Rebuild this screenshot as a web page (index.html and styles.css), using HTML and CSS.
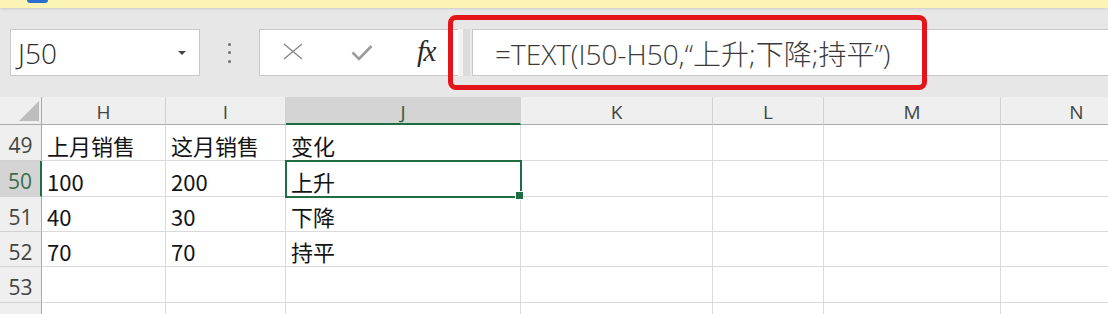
FILE: index.html
```html
<!DOCTYPE html>
<html lang="zh">
<head>
<meta charset="utf-8">
<title>Excel TEXT</title>
<link rel="stylesheet" href="styles.css">
</head>
<body>
<div class="topbar"><span class="orb"></span></div>
<div class="fbar">
  <div class="namebox"><span class="ref">J50</span><span class="caret"></span></div>
  <div class="grip"><i></i><i></i><i></i></div>
  <div class="btns">
    <svg class="ic-x" width="20" height="17" viewBox="0 0 20 17"><path d="M1 1 L19 16 M19 1 L1 16" stroke="#8a8a8a" stroke-width="1.5" fill="none"/></svg>
    <svg class="ic-ok" width="22" height="17" viewBox="0 0 22 17"><path d="M1.5 8.5 L8 15 L20.5 2" stroke="#9a9a9a" stroke-width="2.6" fill="none"/></svg>
    <span class="fx">fx</span>
  </div>
  <div class="split"></div>
  <div class="formula">=TEXT(I50-H50,“上升;下降;持平”)</div>
  <div class="mark"></div>
</div>
<div class="sheet">
  <div class="ch corner"><svg width="20" height="20" viewBox="0 0 20 20"><path d="M20 0 L20 20 L0 20 Z" fill="#bdbdbd"/></svg></div>
  <div class="ch">H</div>
  <div class="ch">I</div>
  <div class="ch sel">J</div>
  <div class="ch">K</div>
  <div class="ch">L</div>
  <div class="ch">M</div>
  <div class="ch">N</div>

  <div class="rh">49</div>
  <div class="c">上月销售</div>
  <div class="c">这月销售</div>
  <div class="c">变化</div>
  <div class="c"></div><div class="c"></div><div class="c"></div><div class="c"></div>

  <div class="rh sel">50</div>
  <div class="c">100</div>
  <div class="c">200</div>
  <div class="c active">上升</div>
  <div class="c"></div><div class="c"></div><div class="c"></div><div class="c"></div>

  <div class="rh">51</div>
  <div class="c">40</div>
  <div class="c">30</div>
  <div class="c">下降</div>
  <div class="c"></div><div class="c"></div><div class="c"></div><div class="c"></div>

  <div class="rh">52</div>
  <div class="c">70</div>
  <div class="c">70</div>
  <div class="c">持平</div>
  <div class="c"></div><div class="c"></div><div class="c"></div><div class="c"></div>

  <div class="rh">53</div>
  <div class="c"></div><div class="c"></div><div class="c"></div>
  <div class="c"></div><div class="c"></div><div class="c"></div><div class="c"></div>

  <div class="rh"></div>
  <div class="c"></div><div class="c"></div><div class="c"></div>
  <div class="c"></div><div class="c"></div><div class="c"></div><div class="c"></div>
</div>
</body>
</html>
```

FILE: styles.css
```css
* { box-sizing: border-box; }
html, body {
  margin: 0;
  padding: 0;
  width: 1108px;
  height: 314px;
  overflow: hidden;
  background: #e7e7e7;
  font-family: "Open Sans", "Noto Sans CJK SC", sans-serif;
}

.topbar {
  height: 8px;
  background: #fcf4b4;
  box-shadow: 0 1px 3px rgba(0,0,0,0.12);
  padding-left: 27px;
  position: relative;
  z-index: 2;
}
.orb {
  display: block;
  width: 21px;
  height: 3px;
  background: #2a6fcf;
  border-radius: 0 0 11px 11px;
}

.fbar {
  position: relative;
  height: 89px;
  padding-top: 21px;
  display: flex;
  align-items: flex-start;
}
.namebox {
  margin-left: 10px;
  width: 190px;
  height: 47px;
  background: #fff;
  border: 1px solid #c9c9c9;
  display: flex;
  align-items: center;
  justify-content: space-between;
  padding: 0 13px 0 7px;
}
.ref {
  font-family: "Open Sans", sans-serif;
  font-weight: 300;
  font-size: 28px;
  color: #2b2b2b;
  line-height: 1;
  margin-top: 1px;
}
.caret {
  width: 0;
  height: 0;
  border-left: 4px solid transparent;
  border-right: 4px solid transparent;
  border-top: 4px solid #444;
}
.grip {
  width: 59px;
  height: 47px;
  display: flex;
  flex-direction: column;
  align-items: center;
  justify-content: center;
  gap: 5.5px;
}
.grip i {
  display: block;
  width: 3px;
  height: 3px;
  border-radius: 50%;
  background: #6f6f6f;
}
.btns {
  width: 199px;
  height: 47px;
  background: #fff;
  border: 1px solid #c9c9c9;
  border-right: none;
  display: flex;
  align-items: center;
  padding-left: 23px;
}
.ic-x { margin-top: -2px; }
.ic-ok { margin-left: 48px; margin-top: -1px; }
.fx {
  margin-left: 44px;
  font-family: "Liberation Serif", serif;
  font-style: italic;
  font-size: 29px;
  color: #2a2a2a;
  letter-spacing: -1.5px;
  margin-top: -3px;
}
.split {
  width: 14px;
  height: 47px;
  background: linear-gradient(to right, #f3f3f3 0 5px, #dcdcdc 5px 12px, #e9e9e9 12px);
}
.formula {
  flex: 1;
  height: 47px;
  background: #fff;
  border-top: 1px solid #c9c9c9;
  border-bottom: 1px solid #c9c9c9;
  border-left: 1px solid #c9c9c9;
  display: flex;
  align-items: center;
  padding-left: 22px;
  font-family: "Open Sans", "Noto Sans CJK SC", sans-serif;
  font-weight: 300;
  font-size: 28px;
  color: #3a3a3a;
  white-space: nowrap;
}
.mark {
  position: absolute;
  left: 448px;
  top: 7px;
  width: 479px;
  height: 75px;
  border: 5px solid #e4141b;
  border-radius: 8px;
}

.sheet {
  display: grid;
  grid-template-columns: 42px 124px 120px 235px 192px 111px 177px 152px;
  grid-template-rows: 28px 36px 36px 35px 35px 36px 36px;
  width: 1153px;
}
.ch {
  background: #efefef;
  border-right: 1px solid #d2d2d2;
  border-bottom: 1px solid #a9a9a9;
  display: flex;
  align-items: center;
  justify-content: center;
  font-family: "Open Sans", sans-serif;
  font-size: 19px;
  color: #444;
  padding-top: 3px;
}
.ch.corner {
  justify-content: flex-end;
  align-items: flex-end;
  padding: 0 2px 3px 0;
  border-right: 1px solid #a9a9a9;
}
.ch.sel {
  background: #d4d4d4;
  border-bottom: 2px solid #1f6e43;
  color: #2b5e42;
}
.rh {
  background: #efefef;
  border-right: 1px solid #a9a9a9;
  border-bottom: 1px solid #d2d2d2;
  display: flex;
  align-items: center;
  justify-content: center;
  font-family: "Open Sans", sans-serif;
  font-size: 21px;
  color: #444;
  padding-top: 5px;
}
.rh.sel {
  background: #d4d4d4;
  border-right: 2px solid #1f6e43;
  color: #3d6b52;
}
.c {
  background: #fff;
  border-right: 1px solid #dadada;
  border-bottom: 1px solid #dadada;
  display: flex;
  align-items: center;
  padding: 4px 0 0 5px;
  font-family: "Noto Sans CJK SC", sans-serif;
  font-size: 22px;
  color: #141414;
  white-space: nowrap;
}
.c.active {
  position: relative;
  z-index: 1;
  outline: 2px solid #1f6e43;
  outline-offset: -1px;
}
.c.active::after {
  content: "";
  position: absolute;
  right: -4px;
  bottom: -4px;
  width: 7px;
  height: 7px;
  background: #1f6e43;
  border: 1px solid #fff;
}
```
